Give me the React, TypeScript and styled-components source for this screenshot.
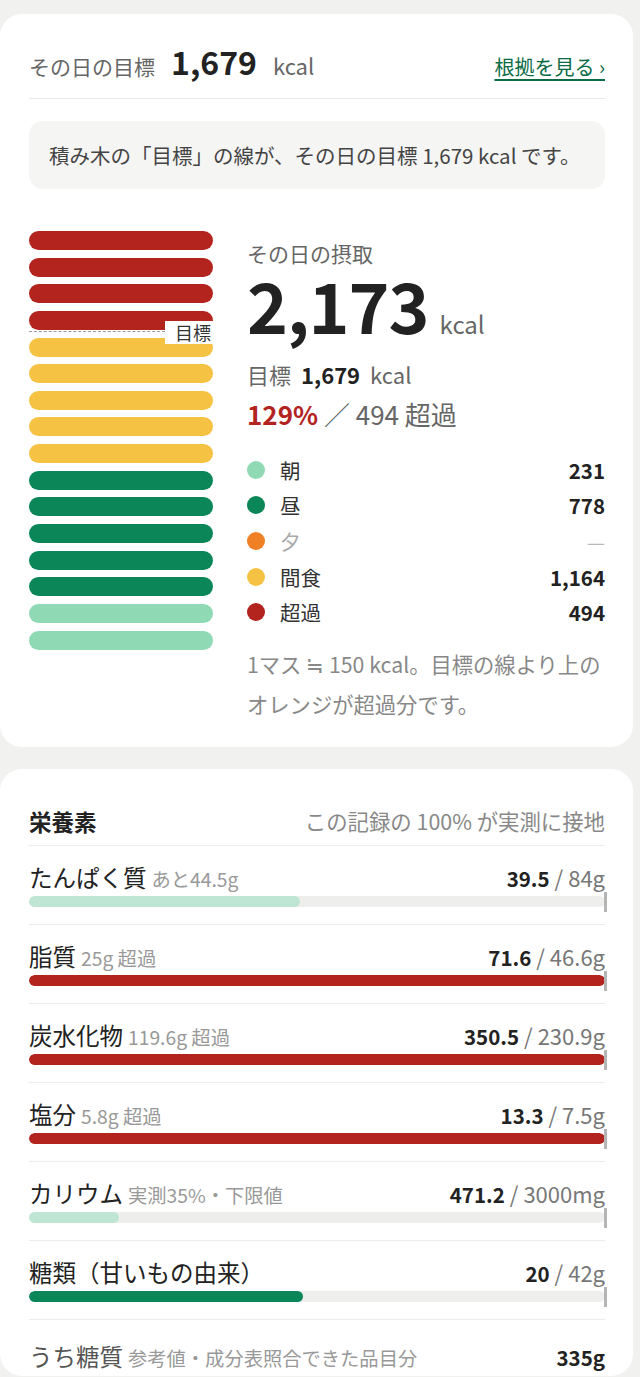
import React from "react";
import styled, { createGlobalStyle } from "styled-components";

const Global = createGlobalStyle`
  html, body { margin: 0; padding: 0; background: #f1f2f0; }
  body { font-family: "Noto Sans CJK JP", "Noto Sans", sans-serif; color: #222; }
  * { box-sizing: border-box; }
`;

const Page = styled.div`
  padding: 14px 7px 0 0;
  display: flex;
  flex-direction: column;
  gap: 22px;
`;

const Card = styled.section<{ $pt: number; $pb: number }>`
  background: #fff;
  border-radius: 22px;
  padding: ${(p) => p.$pt}px 28px ${(p) => p.$pb}px 29px;
`;

const Header = styled.div`
  display: flex;
  align-items: baseline;
  height: 36px;
  line-height: 36px;
  margin-bottom: 19px;
  gap: 16px;
`;

const HeadLabel = styled.span`
  font-size: 21px;
  color: #666;
`;

const HeadValue = styled.span`
  font-size: 32px;
  font-weight: 700;
  color: #222;
`;

const HeadUnit = styled.span`
  font-size: 22px;
  color: #666;
`;

const Link = styled.a`
  margin-left: auto;
  color: #0b6b45;
  font-size: 20px;
  text-decoration: underline;
  text-underline-offset: 4px;
  text-decoration-thickness: 1.5px;
`;

const Divider = styled.div`
  height: 1px;
  background: #e9e9e7;
`;

const InfoBox = styled.div`
  margin-top: 22px;
  background: #f5f5f4;
  border-radius: 14px;
  height: 68px;
  padding: 0 20px;
  display: flex;
  align-items: center;
  font-size: 20.5px;
  color: #444;
  white-space: nowrap;
`;

const Stack = styled.div`
  margin-top: 42px;
  display: flex;
  gap: 34px;
  align-items: flex-start;
`;

const Blocks = styled.div`
  position: relative;
  width: 184px;
  flex: none;
  display: flex;
  flex-direction: column;
  gap: 7.65px;
`;

const Block = styled.div<{ $c: string }>`
  height: 19px;
  border-radius: 10px;
  background: ${(p) => p.$c};
`;

const GoalLine = styled.div`
  position: absolute;
  left: 0;
  right: 0;
  top: 99px;
  height: 2px;
  display: flex;
  align-items: center;
`;

const Dash = styled.div`
  flex: 1;
  border-top: 1.5px dashed #9a9a9a;
`;

const GoalTag = styled.span`
  background: #fff;
  font-size: 18px;
  line-height: 23px;
  color: #333;
  padding: 0 2px 0 4px;
  width: 48px;
  text-align: right;
  margin-top: 3px;
`;

const Summary = styled.div`
  flex: 1;
  display: flex;
  flex-direction: column;
  padding-top: 8px;
`;

const SumLabel = styled.div`
  font-size: 21px;
  line-height: 28px;
  height: 28px;
  color: #666;
`;

const BigRow = styled.div`
  display: flex;
  align-items: baseline;
  gap: 11px;
  height: 74px;
  line-height: 74px;
`;

const Big = styled.span`
  font-size: 69.5px;
  font-weight: 700;
  color: #222;
  letter-spacing: -1px;
`;

const BigUnit = styled.span`
  font-size: 24px;
  line-height: 1;
  color: #666;
`;

const GoalRow = styled.div`
  display: flex;
  align-items: baseline;
  gap: 10px;
  margin-top: 16px;
  font-size: 22px;
  height: 34px;
  line-height: 34px;
  color: #666;
`;

const Strong = styled.span`
  font-weight: 700;
  color: #222;
`;

const PctRow = styled.div`
  margin-top: 3px;
  font-size: 26px;
  height: 40px;
  line-height: 40px;
  color: #666;
`;

const Pct = styled.span`
  color: #b3231f;
  font-weight: 700;
`;

const Legend = styled.div`
  margin-top: 18px;
  display: flex;
  flex-direction: column;
`;

const LegendRow = styled.div<{ $muted?: boolean }>`
  display: flex;
  align-items: center;
  height: 35.6px;
  font-size: 20.5px;
  color: ${(p) => (p.$muted ? "#aaa" : "#333")};
`;

const Dot = styled.span<{ $c: string }>`
  width: 18px;
  height: 18px;
  border-radius: 50%;
  background: ${(p) => p.$c};
  margin-right: 15px;
  flex: none;
`;

const LegendVal = styled.span<{ $muted?: boolean }>`
  margin-left: auto;
  font-weight: ${(p) => (p.$muted ? 400 : 700)};
  color: ${(p) => (p.$muted ? "#bbb" : "#222")};
`;

const Note = styled.p`
  margin: 14px 0 0;
  font-size: 21.3px;
  line-height: 40px;
  color: #888;
`;

const NutHead = styled.div`
  display: flex;
  align-items: center;
  justify-content: space-between;
  height: 36px;
  margin-bottom: 6px;
`;

const NutTitle = styled.span`
  font-size: 22.5px;
  font-weight: 700;
  color: #222;
`;

const NutNote = styled.span`
  font-size: 21.4px;
  color: #888;
`;

const NutRow = styled.div<{ $last?: boolean }>`
  border-top: 1px solid #ececea;
  padding: ${(p) => (p.$last ? 20 : 15)}px 0 ${(p) => (p.$last ? 4 : 17)}px;
`;

const NutLine = styled.div`
  display: flex;
  align-items: baseline;
  height: 32px;
  line-height: 32px;
  white-space: nowrap;
`;

const NutName = styled.span<{ $muted?: boolean }>`
  font-size: 23.5px;
  color: ${(p) => (p.$muted ? "#555" : "#222")};
`;

const NutSub = styled.span`
  font-size: 19.3px;
  color: #999;
  margin-left: 5px;
`;

const NutVal = styled.span`
  margin-left: auto;
  font-size: 20.5px;
  font-weight: 700;
  color: #222;
`;

const NutGoal = styled.span`
  font-size: 22px;
  color: #777;
  font-weight: 400;
  margin-left: 5px;
`;

const TrackWrap = styled.div`
  position: relative;
  margin-top: 3px;
  height: 11px;
`;

const Track = styled.div`
  height: 11px;
  border-radius: 6px;
  background: #eeeeec;
  overflow: hidden;
`;

const Fill = styled.div<{ $c: string }>`
  height: 100%;
  border-radius: 6px;
  background: ${(p) => p.$c};
`;

const Marker = styled.div`
  position: absolute;
  right: -2px;
  top: -4px;
  width: 3px;
  height: 20px;
  background: #b5b5b5;
`;

const RED = "#b3241f";
const YEL = "#f5c244";
const DG = "#0b8658";
const LG = "#8fd9b5";

const blocks = [RED, RED, RED, RED, YEL, YEL, YEL, YEL, YEL, DG, DG, DG, DG, DG, LG, LG];

const legend = [
  { c: LG, l: "朝", v: "231" },
  { c: DG, l: "昼", v: "778" },
  { c: "#ef8026", l: "夕", v: "—", m: true },
  { c: YEL, l: "間食", v: "1,164" },
  { c: RED, l: "超過", v: "494" },
];

const nutrients = [
  { n: "たんぱく質", s: "あと44.5g", v: "39.5", g: "84g", p: 47, c: "#bfe6d4" },
  { n: "脂質", s: "25g 超過", v: "71.6", g: "46.6g", p: 100, c: RED },
  { n: "炭水化物", s: "119.6g 超過", v: "350.5", g: "230.9g", p: 100, c: RED },
  { n: "塩分", s: "5.8g 超過", v: "13.3", g: "7.5g", p: 100, c: RED },
  { n: "カリウム", s: "実測35%・下限値", v: "471.2", g: "3000mg", p: 15.7, c: "#bfe6d4" },
  { n: "糖類（甘いもの由来）", s: "", v: "20", g: "42g", p: 47.6, c: DG },
];

export default function App() {
  return (
    <>
      <Global />
      <Page>
        <Card $pt={29} $pb={23}>
          <Header>
            <HeadLabel>その日の目標</HeadLabel>
            <HeadValue>1,679</HeadValue>
            <HeadUnit>kcal</HeadUnit>
            <Link>根拠を見る ›</Link>
          </Header>
          <Divider />
          <InfoBox>積み木の「目標」の線が、その日の目標 1,679 kcal です。</InfoBox>
          <Stack>
            <Blocks>
              {blocks.map((c, i) => (
                <Block key={i} $c={c} />
              ))}
              <GoalLine>
                <Dash />
                <GoalTag>目標</GoalTag>
              </GoalLine>
            </Blocks>
            <Summary>
              <SumLabel>その日の摂取</SumLabel>
              <BigRow>
                <Big>2,173</Big>
                <BigUnit>kcal</BigUnit>
              </BigRow>
              <GoalRow>
                <span>目標</span>
                <Strong>1,679</Strong>
                <span>kcal</span>
              </GoalRow>
              <PctRow>
                <Pct>129%</Pct> ／ 494 超過
              </PctRow>
              <Legend>
                {legend.map((r) => (
                  <LegendRow key={r.l} $muted={r.m}>
                    <Dot $c={r.c} />
                    <span>{r.l}</span>
                    <LegendVal $muted={r.m}>{r.v}</LegendVal>
                  </LegendRow>
                ))}
              </Legend>
              <Note>1マス ≒ 150 kcal。目標の線より上のオレンジが超過分です。</Note>
            </Summary>
          </Stack>
        </Card>
        <Card $pt={34} $pb={0}>
          <NutHead>
            <NutTitle>栄養素</NutTitle>
            <NutNote>この記録の 100% が実測に接地</NutNote>
          </NutHead>
          {nutrients.map((r) => (
            <NutRow key={r.n}>
              <NutLine>
                <NutName>{r.n}</NutName>
                {r.s && <NutSub>{r.s}</NutSub>}
                <NutVal>
                  {r.v}
                  <NutGoal>/ {r.g}</NutGoal>
                </NutVal>
              </NutLine>
              <TrackWrap>
                <Track>
                  <Fill $c={r.c} style={{ width: `${r.p}%` }} />
                </Track>
                <Marker />
              </TrackWrap>
            </NutRow>
          ))}
          <NutRow $last>
            <NutLine>
              <NutName $muted>うち糖質</NutName>
              <NutSub>参考値・成分表照合できた品目分</NutSub>
              <NutVal>335g</NutVal>
            </NutLine>
          </NutRow>
        </Card>
      </Page>
    </>
  );
}
